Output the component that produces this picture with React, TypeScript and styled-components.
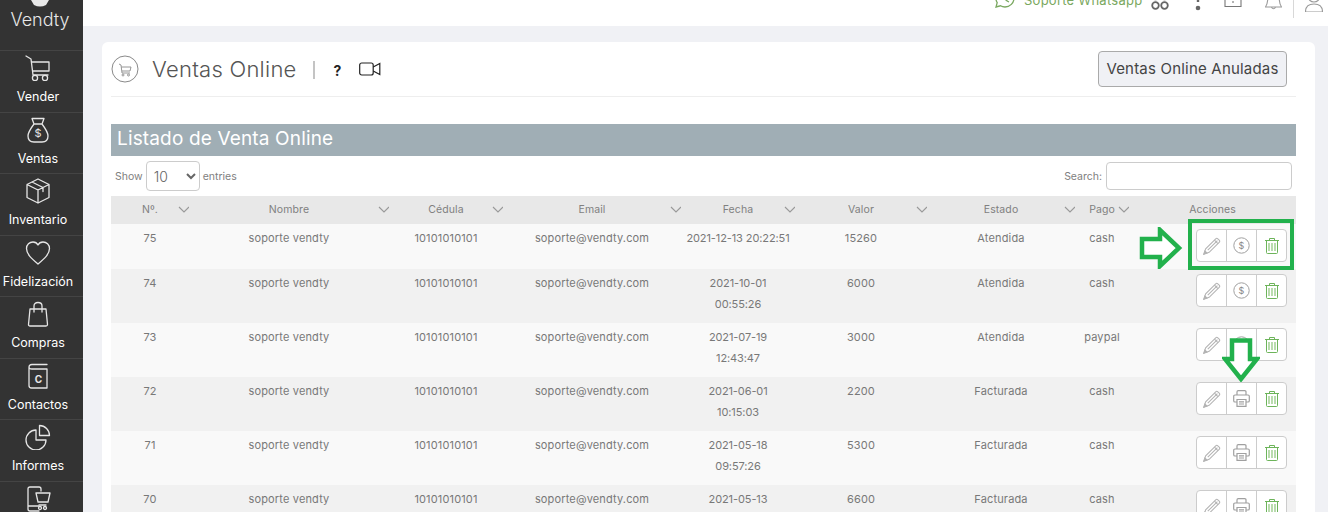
import React from 'react'
import styled, { createGlobalStyle } from 'styled-components'

const FONT = `Inter, "Noto Sans", "Liberation Sans", sans-serif`

const GlobalStyle = createGlobalStyle`
html, body { margin: 0; padding: 0; height: 512px; overflow: hidden; background: #f0f1f5; }
* { box-sizing: border-box; }
`

interface iVenta {
    id: number;
    name: string;
    cedula: string;
    email: string;
    fecha: string;
    valor: number;
    estado: string;
    pago: string;
    action: 'pay' | 'print';
}

const ventas: iVenta[] = [
    { id: 75, name: 'soporte vendty', cedula: '10101010101', email: 'soporte@vendty.com', fecha: '2021-12-13 20:22:51', valor: 15260, estado: 'Atendida', pago: 'cash', action: 'pay' },
    { id: 74, name: 'soporte vendty', cedula: '10101010101', email: 'soporte@vendty.com', fecha: '2021-10-01\n00:55:26', valor: 6000, estado: 'Atendida', pago: 'cash', action: 'pay' },
    { id: 73, name: 'soporte vendty', cedula: '10101010101', email: 'soporte@vendty.com', fecha: '2021-07-19\n12:43:47', valor: 3000, estado: 'Atendida', pago: 'paypal', action: 'pay' },
    { id: 72, name: 'soporte vendty', cedula: '10101010101', email: 'soporte@vendty.com', fecha: '2021-06-01\n10:15:03', valor: 2200, estado: 'Facturada', pago: 'cash', action: 'print' },
    { id: 71, name: 'soporte vendty', cedula: '10101010101', email: 'soporte@vendty.com', fecha: '2021-05-18\n09:57:26', valor: 5300, estado: 'Facturada', pago: 'cash', action: 'print' },
    { id: 70, name: 'soporte vendty', cedula: '10101010101', email: 'soporte@vendty.com', fecha: '2021-05-13', valor: 6600, estado: 'Facturada', pago: 'cash', action: 'print' },
]

const columns = [
    { label: 'Nº.', width: 78 },
    { label: 'Nombre', width: 200 },
    { label: 'Cédula', width: 114 },
    { label: 'Email', width: 178 },
    { label: 'Fecha', width: 114 },
    { label: 'Valor', width: 132 },
    { label: 'Estado', width: 148 },
    { label: 'Pago', width: 54 },
    { label: 'Acciones', width: 167 },
]

const navItems = [
    { key: 'vender', label: 'Vender', icon: <g><path d="M1 1l5 3 2 16h15M7 7h17v9H8" /><circle cx="10" cy="23" r="2.6" /><circle cx="20" cy="23" r="2.6" /></g> },
    { key: 'ventas', label: 'Ventas', icon: <g><path d="M9 7L7 1.500h12L17 7M9 7h8M9 7C6 11 3 15 3 19c0 4 2 6 6 6h8c4 0 6-2 6-6 0-4-3-8-6-12" /><text x="13" y="20" fontSize="11" textAnchor="middle" fill="#e6e6e6" stroke="none" fontFamily="Inter, sans-serif">$</text></g> },
    { key: 'inventario', label: 'Inventario', icon: <g><path d="M13 1l11 5.500v13L13 25 2 19.500v-13zM2 6.500L13 12l11-5.500M13 12v13M7 4l11 5.500v4" /></g> },
    { key: 'fidelizacion', label: 'Fidelización', icon: <path d="M13 24C6 18 1.500 14 1.500 8.500 1.500 4.500 4.500 2 8 2c2.200 0 4 1 5 3 1-2 2.800-3 5-3 3.500 0 6.500 2.500 6.500 6.500C24.500 14 20 18 13 24z" /> },
    { key: 'compras', label: 'Compras', icon: <path d="M5 8h16l1.500 15.500q0 1.500-1.500 1.500H5q-1.500 0-1.500-1.500zM9 11V5q0-3.500 4-3.500T17 5v6" /> },
    { key: 'contactos', label: 'Contactos', icon: <g><path d="M22 1.500H7Q4 1.500 4 4.500v18q0 2.500 2.500 2.500H22V6H7Q4 6 4 4" /><text x="13.500" y="20" fontSize="10" fontWeight="700" textAnchor="middle" fill="#e6e6e6" stroke="none" fontFamily="Inter, sans-serif">C</text></g> },
    { key: 'informes', label: 'Informes', icon: <g><path d="M11 6A10 10 0 1 0 21 16H11z" /><path d="M14.500 1.500a10 10 0 0 1 10 10h-10z" /></g> },
    { key: 'tienda', label: '', icon: <g><path d="M14 25H5q-2 0-2-2V3q0-2 2-2h9q2 0 2 2v2M3 20h11" /><path d="M11 7h14l-2 9H13zM14 19h7" /><circle cx="15" cy="22" r="1.500" /><circle cx="20" cy="22" r="1.500" /></g> },
]

const PencilIcon = () => (
    <svg width="18" height="18" viewBox="0 0 17 17" fill="none" stroke="#b4b4b4" strokeWidth="1">
        <path d="M.8 16.200l1.700-5L12 1.700q1-1 2 0l1.300 1.300q1 1 0 2L5.800 14.500z" />
        <path d="M4.500 12.500L13.600 3.400M10.800 2.900l3.300 3.300" />
        <path d="M.8 16.200l1-3 2 2z" fill="#b4b4b4" />
    </svg>
)

const DollarIcon = () => (
    <svg width="17" height="17" viewBox="0 0 17 17" fill="none">
        <circle cx="8.500" cy="8.500" r="7.700" stroke="#a0a0a0" />
        <text x="8.500" y="11.700" fontSize="9" fill="#888" textAnchor="middle" fontFamily="Inter, sans-serif">$</text>
    </svg>
)

const TrashIcon = () => (
    <svg width="16" height="17" viewBox="0 0 16 17" fill="none" stroke="#6db45a">
        <path d="M1 3.500h14M5.500 3.500V1.500h5v2M2.500 3.500v12q0 1 1 1h9q1 0 1-1v-12" />
        <path d="M5 6v8M8 6v8M11 6v8" stroke="#a9d49b" strokeWidth="1.600" />
    </svg>
)

const PrinterIcon = () => (
    <svg width="17" height="17" viewBox="0 0 17 17" fill="none" stroke="#a0a0a0" strokeWidth="1.200">
        <path d="M4 5V2q0-1.300 1.300-1.300h6.400Q13 .7 13 2v3" />
        <path d="M4 12H2q-1.300 0-1.300-1.300V6.300Q.7 5 2 5h13q1.300 0 1.300 1.300v4.400Q16.300 12 15 12h-2" />
        <path d="M4 9.500h9v6.800H4zM6 11.800h5M6 14h5" />
    </svg>
)

const App = () => {
    return (
        <Page>
            <GlobalStyle />
            <Sidebar>
                <LogoBlock>
                    <svg width="20" height="8" viewBox="0 0 20 8"><path d="M1 0h18l-3 5q-6 3-12 0z" fill="#e8e8e8" /></svg>
                    <LogoText>Vendty</LogoText>
                </LogoBlock>
                {navItems.map((item) => (
                    <NavItem key={item.key}>
                        <svg width="26" height="26" viewBox="0 0 26 26" fill="none" stroke="#e6e6e6" strokeWidth="1.300" strokeLinejoin="round" strokeLinecap="round">
                            {item.icon}
                        </svg>
                        {item.label && <NavLabel>{item.label}</NavLabel>}
                    </NavItem>
                ))}
            </Sidebar>

            <Main>
                <TopBar>
                    <TopIcon $w={20} $ml={0}>
                        <svg width="20" height="24" viewBox="0 0 20 24" fill="none" stroke="#7aa860" strokeWidth="1.300">
                            <path d="M10 1a9 9 0 0 1 0 18q-2.500 0-4.500-1.200L1 19l1.200-4.400A9 9 0 0 1 10 1z" />
                            <path d="M6.500 6q3 6 7.500 8" />
                        </svg>
                    </TopIcon>
                    <SupportText>Soporte Whatsapp</SupportText>
                    <TopIcon $w={18} $ml={9}>
                        <svg width="18" height="24" viewBox="0 0 18 24" fill="none" stroke="#666" strokeWidth="1.800">
                            <circle cx="4.500" cy="17.500" r="3.300" />
                            <circle cx="13.500" cy="17.500" r="3.300" />
                            <circle cx="4.500" cy="8" r="3.300" />
                            <circle cx="13.500" cy="8" r="3.300" />
                        </svg>
                    </TopIcon>
                    <TopIcon $w={14} $ml={22}>
                        <svg width="14" height="24" viewBox="0 0 14 24" fill="none">
                            <path d="M7 9v5" stroke="#666" strokeWidth="2.400" />
                            <circle cx="7" cy="20" r="2.300" fill="#666" />
                        </svg>
                    </TopIcon>
                    <TopIcon $w={18} $ml={19}>
                        <svg width="18" height="24" viewBox="0 0 18 24" fill="none" stroke="#777" strokeWidth="1.100">
                            <path d="M1 6h16v12.500H1zM9 13v2" />
                        </svg>
                    </TopIcon>
                    <TopIcon $w={17} $ml={23}>
                        <svg width="17" height="24" viewBox="0 0 17 24" fill="none" stroke="#999" strokeWidth="1.100">
                            <path d="M3 6q0 10-2.500 13h16Q14 16 14 6M6.500 19.500q2 2.500 4 0" />
                        </svg>
                    </TopIcon>
                    <TopDivider />
                    <TopIcon $w={18} $ml={11}>
                        <svg width="18" height="24" viewBox="0 0 18 24" fill="none" stroke="#999" strokeWidth="1.100">
                            <circle cx="9" cy="8" r="6" />
                            <path d="M.5 24q0-8 8.500-8t8.500 8z" />
                        </svg>
                    </TopIcon>
                </TopBar>

                <Content>
                    <Card>
                        <CardHeader>
                            <TitleGroup>
                                <svg width="28" height="28" viewBox="0 0 28 28" fill="none" stroke="#8a8a8a">
                                    <circle cx="14" cy="14" r="13" />
                                    <path d="M8 9l2 1 1 8h8M10.500 12H20l-1 4h-8" strokeWidth=".9" />
                                    <circle cx="12" cy="20" r="1" strokeWidth=".9" />
                                    <circle cx="17.500" cy="20" r="1" strokeWidth=".9" />
                                </svg>
                                <PageTitle>Ventas Online</PageTitle>
                                <TitleSep />
                                <HelpMark>?</HelpMark>
                                <svg width="22" height="14" viewBox="0 0 22 14" fill="none" stroke="#222" strokeWidth="1.200">
                                    <rect x=".7" y="1" width="13.500" height="12" rx="2" />
                                    <path d="M14.200 5L20.800 1.500v11L14.200 9" />
                                </svg>
                            </TitleGroup>
                            <AnnulledButton>Ventas Online Anuladas</AnnulledButton>
                        </CardHeader>

                        <ListTitle>Listado de Venta Online</ListTitle>

                        <Controls>
                            <ControlLabel>
                                Show
                                <EntriesSelect defaultValue="10">
                                    <option value="10">10</option>
                                    <option value="25">25</option>
                                </EntriesSelect>
                                entries
                            </ControlLabel>
                            <ControlLabel>
                                Search:
                                <SearchInput />
                            </ControlLabel>
                        </Controls>

                        <Table>
                            <colgroup>
                                {columns.map((c) => <col key={c.label} width={c.width} />)}
                            </colgroup>
                            <thead>
                                <tr>
                                    {columns.map((c, i) => (
                                        <Th key={c.label}>
                                            {c.label}
                                            {i < columns.length - 1 && (
                                                <SortMark width="12" height="7" viewBox="0 0 12 7" fill="none" stroke="#999999" strokeWidth="1.100">
                                                    <path d="M1 1l5 5 5-5" />
                                                </SortMark>
                                            )}
                                        </Th>
                                    ))}
                                </tr>
                            </thead>
                            <tbody>
                                {ventas.map((v) => (
                                    <Row key={v.id}>
                                        <Td>{v.id}</Td>
                                        <Td>{v.name}</Td>
                                        <Td>{v.cedula}</Td>
                                        <Td>{v.email}</Td>
                                        <Td $tight>{v.fecha}</Td>
                                        <Td>{v.valor}</Td>
                                        <Td>{v.estado}</Td>
                                        <Td>{v.pago}</Td>
                                        <ActionCell>
                                            <ActionGroup>
                                                <ActionButton><PencilIcon /></ActionButton>
                                                <ActionButton>{v.action === 'pay' ? <DollarIcon /> : <PrinterIcon />}</ActionButton>
                                                <ActionButton><TrashIcon /></ActionButton>
                                            </ActionGroup>
                                        </ActionCell>
                                    </Row>
                                ))}
                            </tbody>
                        </Table>
                    </Card>
                </Content>
            </Main>

            {/* green marks painted over the screenshot */}
            <MarkBox />
            <RightArrow width="44" height="42" viewBox="0 0 44 42">
                <path d="M3 12h18V3l19 18-19 18v-9H3z" fill="#fff" stroke="#22b14c" strokeWidth="4.500" />
            </RightArrow>
            <DownArrow width="38" height="44" viewBox="0 0 38 44">
                <path d="M10 2.500h18V21h7L19 41 3 21h7z" fill="#fff" stroke="#22b14c" strokeWidth="4.500" />
            </DownArrow>
        </Page>
    )
}

export default App

const Page = styled.div`
position: relative;
display: flex;
width: 1328px;
height: 512px;
overflow: hidden;
background-color: #f0f1f5;
font-family: ${FONT};
`
const Sidebar = styled.div`
flex: 0 0 83px;
width: 83px;
height: 512px;
overflow: hidden;
background-color: #333333;
display: flex;
flex-direction: column;
`
const LogoBlock = styled.div`
flex: 0 0 50px;
display: flex;
flex-direction: column;
align-items: center;
padding-right: 3px;
`
const LogoText = styled.div`
font-size: 18px;
line-height: 24px;
font-weight: 300;
color: #e8e8e8;
`
const NavItem = styled.div`
flex: 0 0 61.5px;
display: flex;
flex-direction: column;
align-items: center;
padding: 4px 7px 0 0;
border-top: 1px solid #444444;
`
const NavLabel = styled.div`
margin-top: 8px;
font-size: 12.5px;
line-height: 16px;
color: #ffffff;
white-space: nowrap;
`
const Main = styled.div`
flex: 1;
min-width: 0;
display: flex;
flex-direction: column;
`
const TopBar = styled.div`
flex: 0 0 26px;
height: 26px;
background-color: #ffffff;
display: flex;
align-items: flex-end;
padding: 0 6px 14px 912px;
overflow: hidden;
`
const TopIcon = styled.div<{ $w: number; $ml: number }>`
flex: 0 0 ${({ $w }) => $w}px;
height: 24px;
margin-left: ${({ $ml }) => $ml}px;
svg { display: block; }
`
const SupportText = styled.div`
margin-left: 9px;
width: 120px;
height: 24px;
line-height: 24px;
font-size: 13px;
letter-spacing: 0.25px;
color: #7aa860;
white-space: nowrap;
`
const TopDivider = styled.div`
flex: 0 0 1px;
height: 30px;
margin-bottom: -6px;
margin-left: 11px;
background-color: #d8d8d8;
`
const Content = styled.div`
flex: 1;
padding: 16px 13px 0 19px;
`
const Card = styled.div`
height: 600px;
background-color: #ffffff;
border-radius: 6px;
padding: 9px 19px 0 9px;
`
const CardHeader = styled.div`
display: flex;
align-items: flex-start;
justify-content: space-between;
height: 46px;
border-bottom: 1px solid #eeeeee;
padding-right: 9px;
margin-bottom: 27px;
`
const TitleGroup = styled.div`
display: flex;
align-items: center;
height: 36px;
`
const PageTitle = styled.div`
margin-left: 13px;
font-size: 22px;
font-weight: 300;
color: #555555;
letter-spacing: 0.25px;
`
const TitleSep = styled.div`
width: 2px;
height: 18px;
margin: 1px 0 0 16px;
background-color: #c4c4c4;
`
const HelpMark = styled.div`
margin: 2px 18px 0 19px;
font-size: 14px;
font-weight: 700;
color: #222222;
`
const AnnulledButton = styled.button`
width: 189px;
height: 36px;
padding: 0 0 2px;
background-color: #f0f1f5;
border: 1px solid #aaaaaa;
border-radius: 4px;
font-family: ${FONT};
font-size: 15px;
letter-spacing: 0.2px;
color: #444444;
`
const ListTitle = styled.div`
height: 32px;
line-height: 30px;
padding-left: 6px;
background-color: #a0aeb5;
font-size: 19px;
letter-spacing: 0.15px;
font-weight: 400;
color: #ffffff;
`
const Controls = styled.div`
display: flex;
justify-content: space-between;
align-items: flex-start;
height: 40px;
padding: 5px 4px 0 4px;
`
const ControlLabel = styled.label`
display: flex;
align-items: center;
gap: 3px;
height: 30px;
font-size: 10.5px;
color: #808080;
`
const EntriesSelect = styled.select`
width: 54px;
height: 30px;
padding: 0 3px;
background-color: #ffffff;
border: 1px solid #cccccc;
border-radius: 4px;
font-family: ${FONT};
font-size: 14px;
font-weight: 300;
color: #666666;
`
const SearchInput = styled.input`
width: 186px;
height: 28px;
margin-left: 1px;
background-color: #ffffff;
border: 1px solid #cccccc;
border-radius: 4px;
`
const Table = styled.table`
width: 1185px;
table-layout: fixed;
border-collapse: collapse;
`
const Th = styled.th`
position: relative;
height: 28px;
padding: 0 0 2px;
background-color: #e8e8e8;
font-size: 10.5px;
letter-spacing: 0.1px;
font-weight: 400;
color: #808080;
text-align: center;
`
const SortMark = styled.svg`
position: absolute;
right: -1px;
top: 10px;
`
const Row = styled.tr`
background-color: #f9f9f9;
&:nth-child(even) { background-color: #f1f1f1; }
`
const Td = styled.td<{ $tight?: boolean }>`
padding: 4px 0 8px;
vertical-align: top;
font-size: 11px;
line-height: 21px;
letter-spacing: ${({ $tight }) => ($tight ? '-0.1px' : '0.15px')};
color: #787878;
text-align: center;
white-space: pre-line;
`
const ActionCell = styled.td`
padding: 5px 9px 7px 0;
vertical-align: top;
`
const ActionGroup = styled.div`
display: flex;
width: 91px;
height: 33px;
margin-left: auto;
background-color: #ffffff;
border: 1px solid #cccccc;
border-radius: 4px;
`
const ActionButton = styled.div`
flex: 1;
display: flex;
align-items: center;
justify-content: center;
border-right: 1px solid #cccccc;
&:last-child { border-right: none; }
`
const MarkBox = styled.div`
position: absolute;
left: 1188px;
top: 219px;
width: 106px;
height: 51px;
border: 4px solid #22b14c;
`
const RightArrow = styled.svg`
position: absolute;
left: 1139px;
top: 227px;
`
const DownArrow = styled.svg`
position: absolute;
left: 1222px;
top: 338px;
`
